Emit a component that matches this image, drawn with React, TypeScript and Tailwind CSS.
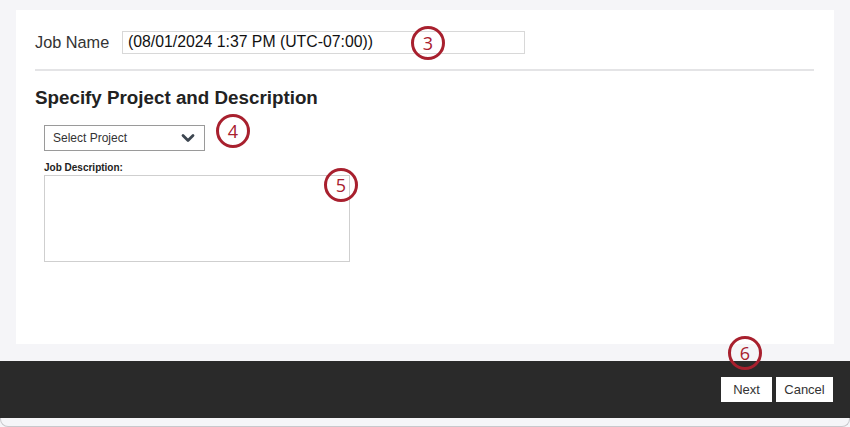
import React from "react";

const Marker = ({ n, className }: { n: number; className: string }) => (
  <div
    className={`absolute flex h-[34px] w-[34px] items-center justify-center rounded-full border-[3px] border-[#a8202e] text-[18px] text-[#a8202e] ${className}`}
    style={{ fontFamily: '"Open Sans", sans-serif' }}
  >
    {n}
  </div>
);

const ChevronDown = () => (
  <svg width="14" height="10" viewBox="0 0 14 10" fill="none">
    <path
      d="M2 2.5 L7 7.5 L12 2.5"
      stroke="#3d4650"
      strokeWidth="2.8"
      strokeLinecap="round"
      strokeLinejoin="round"
    />
  </svg>
);

export default function App() {
  return (
    <div
      className="relative flex h-[427px] w-[850px] flex-col overflow-hidden bg-[#f5f5f8] text-[#333]"
      style={{ fontFamily: '"Liberation Sans", Arial, sans-serif' }}
    >
      <div className="mx-4 mt-[10px] h-[334px] bg-white pl-[19px] pr-[20px] pt-[20px]">
        <div className="flex items-center">
          <span className="w-[87px] text-[16.3px] text-[#333]">Job Name</span>
          <div className="flex h-[23px] w-[403px] items-center border border-[#d8d8d8] pl-[5px] text-[15.8px] text-[#111]">
            (08/01/2024 1:37 PM (UTC-07:00))
          </div>
        </div>
        <div className="mt-[15px] h-[2px] bg-[#e4e4e6]" />
        <h2 className="mt-[16px] text-[18.8px] font-bold leading-[22px] text-[#222]">
          Specify Project and Description
        </h2>
        <div className="ml-[9px] mt-[16px] flex h-[26px] w-[161px] items-center justify-between border border-[#9a9a9a] pl-[8px] pr-[9px] text-[12px] text-[#333]">
          <span>Select Project</span>
          <ChevronDown />
        </div>
        <div className="ml-[9px] mt-[11px] text-[10px] font-bold leading-[12px] text-[#222]">
          Job Description:
        </div>
        <div className="ml-[9px] mt-[1px] h-[87px] w-[306px] border border-[#cfcfcf]" />
      </div>

      <div className="mt-[17px] flex h-[57px] items-center justify-end gap-[4px] bg-[#2a2a2a] pr-[17px]">
        <button className="h-[25px] w-[51px] bg-white text-[13px] text-[#333]">
          Next
        </button>
        <button className="h-[25px] w-[57px] bg-white text-[13px] text-[#333]">
          Cancel
        </button>
      </div>
      <div className="h-[9px] rounded-b-[8px] border-x border-b border-[#c8c8cc] bg-[#f5f5f8]" />

      <Marker n={3} className="left-[411px] top-[26px]" />
      <Marker n={4} className="left-[216px] top-[114px]" />
      <Marker n={5} className="left-[324px] top-[168px]" />
      <Marker n={6} className="left-[728px] top-[336px]" />
    </div>
  );
}
